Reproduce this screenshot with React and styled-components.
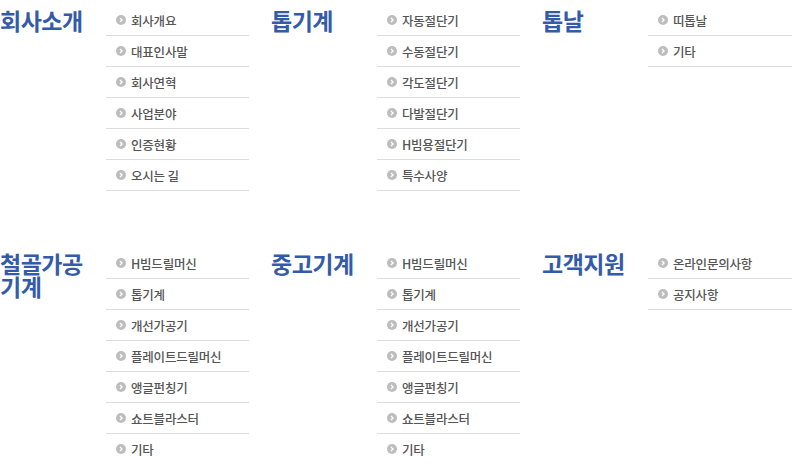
import React from "react";
import styled, { createGlobalStyle } from "styled-components";

const GlobalStyle = createGlobalStyle`
  body {
    margin: 0;
    background: #fff;
    font-family: "Noto Sans CJK KR", "Noto Sans", sans-serif;
  }
`;

const Page = styled.div`
  display: grid;
  grid-template-columns: repeat(3, 271px);
  row-gap: 57px;
  padding-top: 5px;
  width: 793px;
`;

const Section = styled.div`
  display: flex;
  align-items: flex-start;
`;

const TitleBox = styled.div`
  width: 106px;
  flex-shrink: 0;
`;

const Title = styled.h2`
  width: 92px;
  margin: 4px 0 0;
  font-size: 23px;
  line-height: 23px;
  font-weight: 700;
  letter-spacing: -0.5px;
  color: #335ba9;
`;

const List = styled.ul`
  width: ${(p) => p.$width || 143}px;
  margin: 0;
  padding: 0;
  list-style: none;
`;

const Item = styled.li`
  display: flex;
  align-items: center;
  height: 30px;
  padding-left: 10px;
  border-bottom: 1px solid #dddddd;
  font-size: 12.5px;
  font-weight: 500;
  letter-spacing: -0.2px;
  color: #555555;
`;

const Bullet = styled.span`
  display: inline-flex;
  align-items: center;
  justify-content: center;
  width: 10px;
  height: 10px;
  margin-right: 5px;
  border-radius: 50%;
  background: #bdbdbd;
  flex-shrink: 0;
`;

const menus = [
  { title: "회사소개", items: ["회사개요", "대표인사말", "회사연혁", "사업분야", "인증현황", "오시는 길"] },
  { title: "톱기계", items: ["자동절단기", "수동절단기", "각도절단기", "다발절단기", "H빔용절단기", "특수사양"] },
  { title: "톱날", items: ["띠톱날", "기타"], width: 144 },
  {
    title: "철골가공 기계",
    items: ["H빔드릴머신", "톱기계", "개선가공기", "플레이트드릴머신", "앵글펀칭기", "쇼트블라스터", "기타"],
  },
  {
    title: "중고기계",
    items: ["H빔드릴머신", "톱기계", "개선가공기", "플레이트드릴머신", "앵글펀칭기", "쇼트블라스터", "기타"],
  },
  { title: "고객지원", items: ["온라인문의사항", "공지사항"], width: 144 },
];

const Arrow = () => (
  <svg width="6" height="6" viewBox="0 0 6 6">
    <path d="M2 1 L4 3 L2 5" fill="none" stroke="#fff" strokeWidth="1.4" />
  </svg>
);

export default function App() {
  return (
    <>
      <GlobalStyle />
      <Page>
        {menus.map((m) => (
          <Section key={m.title}>
            <TitleBox>
              <Title>{m.title}</Title>
            </TitleBox>
            <List $width={m.width}>
              {m.items.map((it) => (
                <Item key={it}>
                  <Bullet>
                    <Arrow />
                  </Bullet>
                  {it}
                </Item>
              ))}
            </List>
          </Section>
        ))}
      </Page>
    </>
  );
}
